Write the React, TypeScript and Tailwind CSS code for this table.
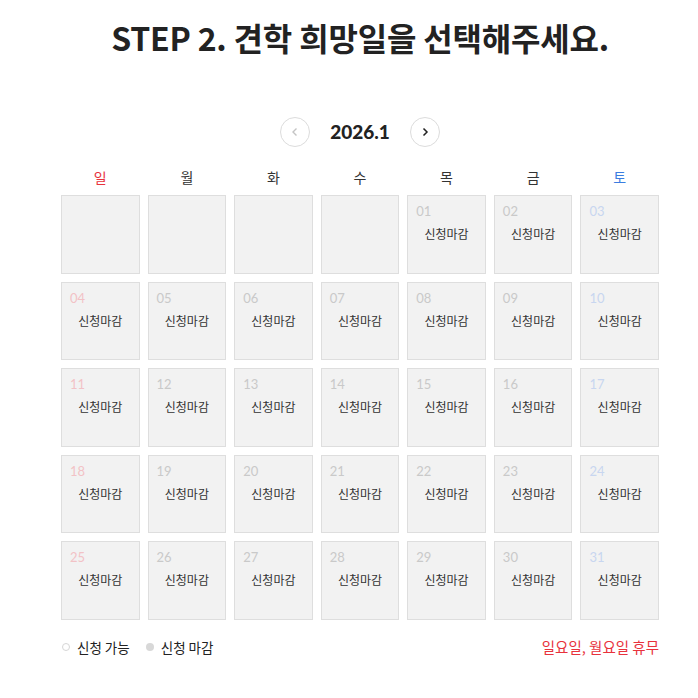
import React from 'react';

const DAYS = ['일', '월', '화', '수', '목', '금', '토'];

type Cell = { day: number | null };

function buildCells(): Cell[] {
  const cells: Cell[] = [];
  for (let i = 0; i < 4; i++) cells.push({ day: null });
  for (let d = 1; d <= 31; d++) cells.push({ day: d });
  return cells;
}

function numColor(idx: number) {
  const col = idx % 7;
  if (col === 0) return 'text-[#f2c2c6]';
  if (col === 6) return 'text-[#c8d6f0]';
  return 'text-[#c9c9c9]';
}

export default function App() {
  const cells = buildCells();

  return (
    <div className="min-h-[698px] bg-white pl-[61px] pr-[39px] font-['Noto_Sans_CJK_KR','Noto_Sans',sans-serif]">
      {/* Title */}
      <h1 className="pt-[15px] text-center text-[32px] font-bold leading-[44px] text-[#222] tracking-[-0.2px]">
        STEP 2. 견학 희망일을 선택해주세요.
      </h1>

      {/* Month nav */}
      <div className="mt-[58px] flex items-center justify-center gap-[20px]">
        <button className="flex h-[30px] w-[30px] items-center justify-center rounded-full border border-[#dcdcdc] text-[#c4c4c4]">
          <svg width="10" height="10" viewBox="0 0 10 10" fill="none" stroke="currentColor" strokeWidth="1.4">
            <path d="M6.5 1.5 3 5l3.5 3.5" />
          </svg>
        </button>
        <div className="w-[60px] text-center text-[19px] font-black text-[#222] font-['Lato','Noto_Sans',sans-serif]">2026.1</div>
        <button className="flex h-[30px] w-[30px] items-center justify-center rounded-full border border-[#dcdcdc] text-[#222]">
          <svg width="10" height="10" viewBox="0 0 10 10" fill="none" stroke="currentColor" strokeWidth="1.5">
            <path d="M3.5 1.5 7 5 3.5 8.5" />
          </svg>
        </button>
      </div>

      {/* Weekday headers */}
      <div className="mt-[19px] grid grid-cols-7 gap-x-[8px]">
        {DAYS.map((d, i) => (
          <div
            key={d}
            className={`h-[22px] text-center text-[14px] leading-[22px] ${
              i === 0 ? 'text-[#e8323c]' : i === 6 ? 'text-[#3b7de0]' : 'text-[#333]'
            }`}
          >
            {d}
          </div>
        ))}
      </div>

      {/* Calendar grid */}
      <div className="mt-[7px] grid grid-cols-7 gap-[8px]">
        {cells.map((c, i) => (
          <div key={i} className="aspect-square border border-[#dedede] bg-[#f2f2f2] px-[8px] pt-[6px]">
            {c.day !== null && (
              <>
                <div className={`text-[13px] leading-[18px] font-['Lato','Noto_Sans',sans-serif] ${numColor(i)}`}>
                  {String(c.day).padStart(2, '0')}
                </div>
                <div className="mt-[5px] text-center text-[12px] leading-[18px] text-[#333]">신청마감</div>
              </>
            )}
          </div>
        ))}
      </div>

      {/* Legend */}
      <div className="mt-[16px] flex items-center justify-between text-[14px]">
        <div className="flex items-center">
          <span className="ml-[1px] h-[8px] w-[8px] rounded-full border border-[#d6d6d6]" />
          <span className="ml-[7px] text-[13.5px] text-[#222]">신청 가능</span>
          <span className="ml-[16px] h-[8px] w-[8px] rounded-full bg-[#d8d8d8]" />
          <span className="ml-[7px] text-[13.5px] text-[#222]">신청 마감</span>
        </div>
        <div className="text-[14.5px] text-[#e8323c]">일요일, 월요일 휴무</div>
      </div>
    </div>
  );
}
